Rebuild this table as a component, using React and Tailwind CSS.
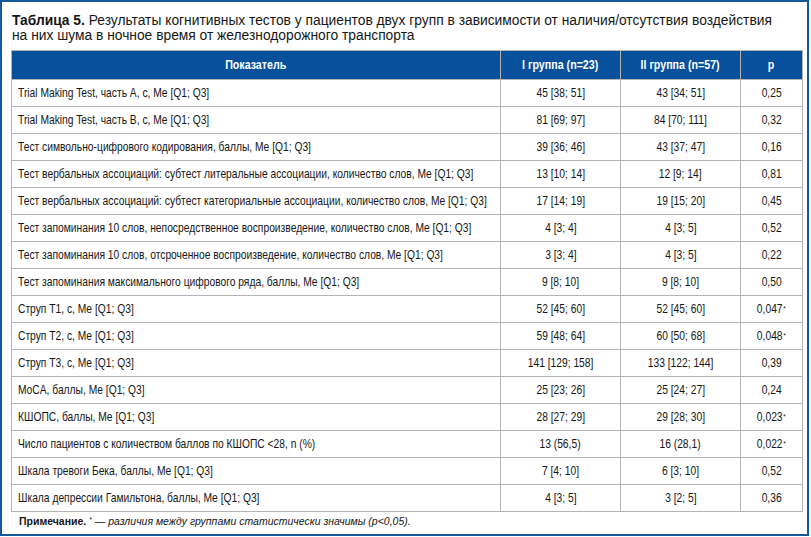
import React from 'react';

const rows = [
  ['Trial Making Test, часть A, с, Me [Q1; Q3]', '45 [38; 51]', '43 [34; 51]', '0,25'],
  ['Trial Making Test, часть B, с, Me [Q1; Q3]', '81 [69; 97]', '84 [70; 111]', '0,32'],
  ['Тест символьно-цифрового кодирования, баллы, Me [Q1; Q3]', '39 [36; 46]', '43 [37; 47]', '0,16'],
  ['Тест вербальных ассоциаций: субтест литеральные ассоциации, количество слов, Me [Q1; Q3]', '13 [10; 14]', '12 [9; 14]', '0,81'],
  ['Тест вербальных ассоциаций: субтест категориальные ассоциации, количество слов, Me [Q1; Q3]', '17 [14; 19]', '19 [15; 20]', '0,45'],
  ['Тест запоминания 10 слов, непосредственное воспроизведение, количество слов, Me [Q1; Q3]', '4 [3; 4]', '4 [3; 5]', '0,52'],
  ['Тест запоминания 10 слов, отсроченное воспроизведение, количество слов, Me [Q1; Q3]', '3 [3; 4]', '4 [3; 5]', '0,22'],
  ['Тест запоминания максимального цифрового ряда, баллы, Me [Q1; Q3]', '9 [8; 10]', '9 [8; 10]', '0,50'],
  ['Струп Т1, с, Me [Q1; Q3]', '52 [45; 60]', '52 [45; 60]', '0,047', true],
  ['Струп Т2, с, Me [Q1; Q3]', '59 [48; 64]', '60 [50; 68]', '0,048', true],
  ['Струп Т3, с, Me [Q1; Q3]', '141 [129; 158]', '133 [122; 144]', '0,39'],
  ['MoCA, баллы, Me [Q1; Q3]', '25 [23; 26]', '25 [24; 27]', '0,24'],
  ['КШОПС, баллы, Me [Q1; Q3]', '28 [27; 29]', '29 [28; 30]', '0,023', true],
  ['Число пациентов с количеством баллов по КШОПС <28, n (%)', '13 (56,5)', '16 (28,1)', '0,022', true],
  ['Шкала тревоги Бека, баллы, Me [Q1; Q3]', '7 [4; 10]', '6 [3; 10]', '0,52'],
  ['Шкала депрессии Гамильтона, баллы, Me [Q1; Q3]', '4 [3; 5]', '3 [2; 5]', '0,36'],
];

// condensed look: Arial-width font squeezed horizontally
function Cond({ children, left }) {
  return (
    <span className={`inline-block whitespace-nowrap scale-x-[0.79] ${left ? 'origin-left' : 'origin-center'}`}>
      {children}
    </span>
  );
}

export default function App() {
  return (
    <div className="w-[809px] h-[536px] bg-white border-2 border-[#14589f] pl-[9px] pr-[5px] pt-[11px] font-['Liberation_Sans',Arial,sans-serif] text-[#161616]">
      {/* Title */}
      <p className="max-w-[775px] text-[13.8px] leading-[15px] pl-[1px]">
        <span className="font-bold">Таблица 5.</span> Результаты когнитивных тестов у пациентов двух групп в зависимости от наличия/отсутствия воздействия на них шума в ночное время от железнодорожного транспорта
      </p>

      <table className="mt-[7px] w-[791px] border-collapse table-fixed text-[13px]">
        <colgroup>
          <col className="w-[489px]" />
          <col className="w-[120px]" />
          <col className="w-[120px]" />
          <col className="w-[62px]" />
        </colgroup>
        <thead>
          <tr className="h-[29px] bg-[#07509c] text-white font-bold text-[13.5px]">
            <th className="border border-[#b4b4b4] text-center"><Cond>Показатель</Cond></th>
            <th className="border border-[#b4b4b4] text-center"><Cond>I группа (n=23)</Cond></th>
            <th className="border border-[#b4b4b4] text-center"><Cond>II группа (n=57)</Cond></th>
            <th className="border border-[#b4b4b4] text-center"><Cond>p</Cond></th>
          </tr>
        </thead>
        <tbody>
          {rows.map((r, i) => (
            <tr key={i} className="h-[27px]">
              <td className="border border-[#b4b4b4] pl-[6px] overflow-visible"><Cond left>{r[0]}</Cond></td>
              <td className="border border-[#b4b4b4] text-center"><Cond>{r[1]}</Cond></td>
              <td className="border border-[#b4b4b4] text-center"><Cond>{r[2]}</Cond></td>
              <td className="border border-[#b4b4b4] text-center">
                <Cond>
                  {r[3]}
                  {r[4] && <sup className="text-[8px] relative -top-[2px] ml-[1px]">*</sup>}
                </Cond>
              </td>
            </tr>
          ))}
        </tbody>
      </table>

      {/* Note */}
      <p className="mt-[3px] pl-[8px] text-[10.5px] leading-[13px]">
        <span className="font-bold">Примечание.</span> <sup className="text-[7px]">*</sup> — <span className="italic">различия между группами статистически значимы (p&lt;0,05).</span>
      </p>
    </div>
  );
}
